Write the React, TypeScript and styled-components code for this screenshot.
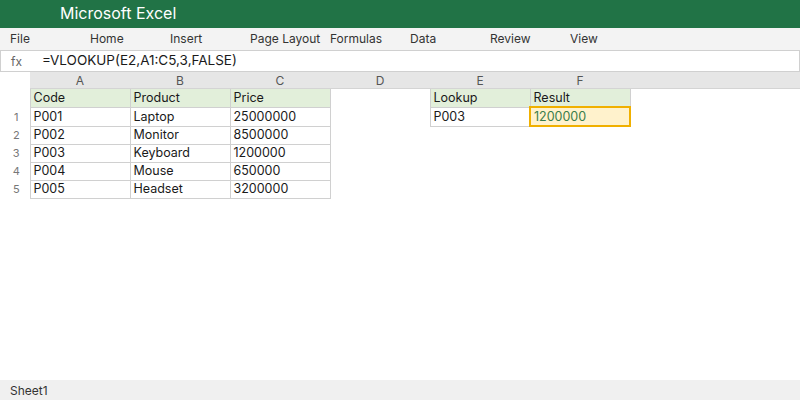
import React from "react";
import styled, { createGlobalStyle } from "styled-components";

const GlobalStyle = createGlobalStyle`
  html, body {
    margin: 0;
    padding: 0;
    background: #fff;
    font-family: Inter, "Noto Sans", Arial, sans-serif;
  }
`;

const Window = styled.div`
  width: 800px;
  height: 400px;
  display: flex;
  flex-direction: column;
  overflow: hidden;
`;

const TitleBar = styled.div`
  height: 26px;
  background: #217346;
  color: #fff;
  font-size: 16px;
  display: flex;
  align-items: center;
  padding-left: 60px;
  padding-bottom: 2px;
`;

const MenuBar = styled.div`
  height: 20px;
  background: #f3f3f3;
  display: flex;
  align-items: center;
  padding: 0 0 2px 10px;
`;

const MenuItem = styled.div`
  width: 80px;
  font-size: 12px;
  color: #333;
  white-space: nowrap;
`;

const FormulaBar = styled.div`
  height: 20px;
  border: 1px solid #d0d0d0;
  background: #fff;
  display: flex;
  align-items: center;
`;

const Fx = styled.span`
  width: 41px;
  padding-left: 10px;
  box-sizing: border-box;
  font-size: 12px;
  color: #666;
`;

const Formula = styled.span`
  font-size: 13.5px;
  color: #1a1a1a;
  padding-bottom: 2px;
`;

const SheetArea = styled.div`
  flex: 1;
`;

const Grid = styled.table`
  border-collapse: collapse;
  table-layout: fixed;
  width: 800px;
`;

const ColHead = styled.th`
  height: 16px;
  padding: 0;
  background: #e6e6e6;
  font-weight: normal;
  font-size: 12px;
  color: #555;
  text-align: center;
  border-bottom: 1px solid #d4d4d4;
`;

const Corner = styled.th`
  padding: 0;
  background: #fff;
`;

const RowNum = styled.td`
  height: 17px;
  padding: 0 0 0 3px;
  font-size: 11px;
  color: #777;
  text-align: center;
`;

const Cell = styled.td<{ $head?: boolean; $empty?: boolean; $active?: boolean }>`
  height: 17px;
  padding: 0 0 0 3px;
  font-size: 12.5px;
  line-height: 16px;
  color: ${p => (p.$active ? "#3a7d4a" : "#1a1a1a")};
  white-space: nowrap;
  background: ${p => (p.$active ? "#fff2cc" : p.$head ? "#e2efda" : "transparent")};
  border: ${p =>
    p.$active ? "2px solid #f0b000" : p.$empty ? "none" : "1px solid #d0d0d0"};
`;

const StatusBar = styled.div`
  height: 20px;
  background: #f0f0f0;
  display: flex;
  align-items: center;
  padding-left: 10px;
  font-size: 12px;
  color: #333;
`;

const menu = ["File", "Home", "Insert", "Page Layout", "Formulas", "Data", "Review", "View"];
const cols = ["A", "B", "C", "D", "E", "F"];

const products = [
  ["P001", "Laptop", "25000000"],
  ["P002", "Monitor", "8500000"],
  ["P003", "Keyboard", "1200000"],
  ["P004", "Mouse", "650000"],
  ["P005", "Headset", "3200000"],
];

export default function App() {
  return (
    <Window>
      <GlobalStyle />
      <TitleBar>Microsoft Excel</TitleBar>
      <MenuBar>
        {menu.map(m => (
          <MenuItem key={m}>{m}</MenuItem>
        ))}
      </MenuBar>
      <FormulaBar>
        <Fx>fx</Fx>
        <Formula>=VLOOKUP(E2,A1:C5,3,FALSE)</Formula>
      </FormulaBar>
      <SheetArea>
        <Grid>
          <colgroup>
            <col style={{ width: 30 }} />
            {cols.map(c => (
              <col key={c} style={{ width: 100 }} />
            ))}
            <col />
          </colgroup>
          <thead>
            <tr>
              <Corner />
              {cols.map(c => (
                <ColHead key={c}>{c}</ColHead>
              ))}
              <ColHead />
            </tr>
          </thead>
          <tbody>
            <tr>
              <RowNum />
              <Cell $head>Code</Cell>
              <Cell $head>Product</Cell>
              <Cell $head>Price</Cell>
              <Cell $empty />
              <Cell $head>Lookup</Cell>
              <Cell $head>Result</Cell>
              <Cell $empty />
            </tr>
            {products.map((row, i) => (
              <tr key={row[0]}>
                <RowNum>{i + 1}</RowNum>
                {row.map(v => (
                  <Cell key={v}>{v}</Cell>
                ))}
                <Cell $empty />
                {i === 0 ? (
                  <>
                    <Cell>P003</Cell>
                    <Cell $active>1200000</Cell>
                  </>
                ) : (
                  <>
                    <Cell $empty />
                    <Cell $empty />
                  </>
                )}
                <Cell $empty />
              </tr>
            ))}
          </tbody>
        </Grid>
      </SheetArea>
      <StatusBar>Sheet1</StatusBar>
    </Window>
  );
}
